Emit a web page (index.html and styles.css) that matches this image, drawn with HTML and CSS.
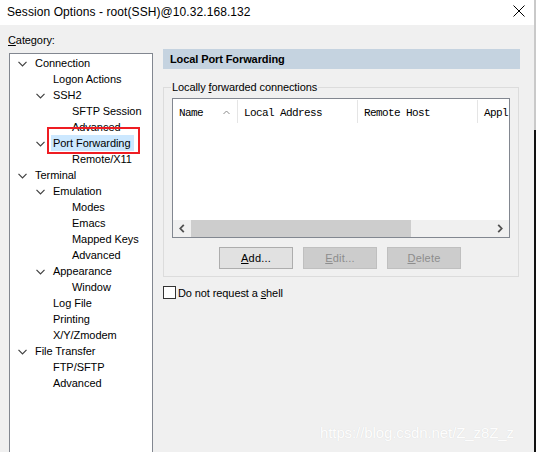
FILE: index.html
```html
<!DOCTYPE html>
<html>
<head>
<meta charset="utf-8">
<link rel="stylesheet" href="styles.css">
</head>
<body>
<div class="window">
  <div class="main">
    <div class="titlebar">
      <span class="title">Session Options - root(SSH)@10.32.168.132</span>
      <svg class="close" width="12" height="12" viewBox="0 0 12 12"><path d="M0.5 0.5 L11.5 11.5 M11.5 0.5 L0.5 11.5" stroke="#000" stroke-width="1" fill="none"/></svg>
    </div>
    <div class="body">
      <div class="left">
        <div class="cat-label"><u>C</u>ategory:</div>
        <div class="tree">
          <div class="row l0"><span class="tw"><svg width="9" height="6" viewBox="0 0 9 6"><path d="M0.5 0.8 L4.5 4.8 L8.5 0.8" stroke="#404040" stroke-width="1.2" fill="none"/></svg></span><span class="txt">Connection</span></div>
          <div class="row l1"><span class="tw"></span><span class="txt">Logon Actions</span></div>
          <div class="row l1"><span class="tw"><svg width="9" height="6" viewBox="0 0 9 6"><path d="M0.5 0.8 L4.5 4.8 L8.5 0.8" stroke="#404040" stroke-width="1.2" fill="none"/></svg></span><span class="txt">SSH2</span></div>
          <div class="row l2"><span class="txt">SFTP Session</span></div>
          <div class="row l2"><span class="txt">Advanced</span></div>
          <div class="row l1"><span class="tw"><svg width="9" height="6" viewBox="0 0 9 6"><path d="M0.5 0.8 L4.5 4.8 L8.5 0.8" stroke="#404040" stroke-width="1.2" fill="none"/></svg></span><span class="txt sel">Port Forwarding</span></div>
          <div class="row l2"><span class="txt">Remote/X11</span></div>
          <div class="row l0"><span class="tw"><svg width="9" height="6" viewBox="0 0 9 6"><path d="M0.5 0.8 L4.5 4.8 L8.5 0.8" stroke="#404040" stroke-width="1.2" fill="none"/></svg></span><span class="txt">Terminal</span></div>
          <div class="row l1"><span class="tw"><svg width="9" height="6" viewBox="0 0 9 6"><path d="M0.5 0.8 L4.5 4.8 L8.5 0.8" stroke="#404040" stroke-width="1.2" fill="none"/></svg></span><span class="txt">Emulation</span></div>
          <div class="row l2"><span class="txt">Modes</span></div>
          <div class="row l2"><span class="txt">Emacs</span></div>
          <div class="row l2"><span class="txt">Mapped Keys</span></div>
          <div class="row l2"><span class="txt">Advanced</span></div>
          <div class="row l1"><span class="tw"><svg width="9" height="6" viewBox="0 0 9 6"><path d="M0.5 0.8 L4.5 4.8 L8.5 0.8" stroke="#404040" stroke-width="1.2" fill="none"/></svg></span><span class="txt">Appearance</span></div>
          <div class="row l2"><span class="txt">Window</span></div>
          <div class="row l1"><span class="tw"></span><span class="txt">Log File</span></div>
          <div class="row l1"><span class="tw"></span><span class="txt">Printing</span></div>
          <div class="row l1"><span class="tw"></span><span class="txt">X/Y/Zmodem</span></div>
          <div class="row l0"><span class="tw"><svg width="9" height="6" viewBox="0 0 9 6"><path d="M0.5 0.8 L4.5 4.8 L8.5 0.8" stroke="#404040" stroke-width="1.2" fill="none"/></svg></span><span class="txt">File Transfer</span></div>
          <div class="row l1"><span class="tw"></span><span class="txt">FTP/SFTP</span></div>
          <div class="row l1"><span class="tw"></span><span class="txt">Advanced</span></div>
          <div class="annot"></div>
        </div>
      </div>
      <div class="right">
        <div class="section-head">Local Port Forwarding</div>
        <fieldset class="group">
          <legend>Locally <u>f</u>orwarded connections</legend>
          <div class="listbox">
            <div class="list-head">
              <div class="col c-name">Name<svg class="caret" width="7" height="5" viewBox="0 0 7 5"><path d="M0.5 4 L3.5 1 L6.5 4" stroke="#8a8a8a" stroke-width="1" fill="none"/></svg></div>
              <div class="col c-mid">Local Address</div>
              <div class="col c-mid">Remote Host</div>
              <div class="col c-last">Appl</div>
            </div>
            <div class="list-body"></div>
            <div class="hscroll">
              <div class="sb-btn"><svg width="6" height="9" viewBox="0 0 6 9"><path d="M4.8 0.8 L1.3 4.5 L4.8 8.2" stroke="#505050" stroke-width="1.8" fill="none"/></svg></div>
              <div class="sb-thumb"></div>
              <div class="sb-track"></div>
              <div class="sb-btn"><svg width="6" height="9" viewBox="0 0 6 9"><path d="M1.2 0.8 L4.7 4.5 L1.2 8.2" stroke="#505050" stroke-width="1.8" fill="none"/></svg></div>
            </div>
          </div>
          <div class="buttons">
            <div class="btn"><u>A</u>dd...</div>
            <div class="btn disabled"><u>E</u>dit...</div>
            <div class="btn disabled"><u>D</u>elete</div>
          </div>
        </fieldset>
        <div class="check"><span class="box"></span><span>Do not request a <u>s</u>hell</span></div>
      </div>
    </div>
  </div>
  <div class="edge"><div class="edge-top"></div><div class="edge-bot"></div></div>
  <div class="watermark">https://blog.csdn.net/Z_z8Z_z</div>
</div>
</body>
</html>
```

FILE: styles.css
```css
* { box-sizing: border-box; }
html, body { margin: 0; padding: 0; }
body {
  width: 537px;
  height: 452px;
  overflow: hidden;
  font-family: "Liberation Sans", Arial, sans-serif;
  font-size: 11px;
  color: #000;
  background: #f0f0f0;
}
.window {
  position: relative;
  display: flex;
  width: 537px;
  height: 452px;
  overflow: hidden;
}
.main {
  width: 534px;
  flex: none;
  display: flex;
  flex-direction: column;
  min-height: 0;
}
.edge {
  width: 3px;
  flex: none;
  display: flex;
  flex-direction: column;
  border-right: 1px solid #fff;
}
.edge-top { height: 130px; flex: none; background: #c9c9c9; }
.edge-bot { flex: 1; background: #111; }

.titlebar {
  height: 25px;
  flex: none;
  background: #fff;
  display: flex;
  align-items: center;
  justify-content: space-between;
  padding: 0 9px 1px 7px;
}
.title { font-size: 12px; letter-spacing: 0.08px; }
.close { margin-top: -2px; }

.body {
  flex: 1;
  min-height: 0;
  overflow: hidden;
  display: flex;
  background: #f0f0f0;
}
.left {
  width: 153px;
  flex: none;
  padding: 7px 0 0 9px;
  display: flex;
  flex-direction: column;
}
.cat-label {
  height: 16px;
  flex: none;
  line-height: 16px;
  margin-left: -1px;
  letter-spacing: -0.1px;
}
.tree {
  position: relative;
  flex: none;
  margin-top: 5px;
  width: 144px;
  height: 420px;
  background: #fff;
  border: 1px solid #828790;
  padding-top: 1px;
}
.row {
  height: 16px;
  display: flex;
  align-items: center;
  white-space: nowrap;
  letter-spacing: -0.05px;
}
.row.l0 { padding-left: 8px; }
.row.l1 { padding-left: 26px; }
.row.l2 { padding-left: 62px; }
.tw {
  width: 17px;
  height: 16px;
  display: flex;
  align-items: center;
  flex: none;
}
.tw svg { margin-top: 1px; }
.txt { line-height: 16px; }
.txt.sel {
  background: #cce8ff;
  padding: 0 3px 0 2px;
  margin-left: -2px;
}
.annot {
  position: absolute;
  left: 37px;
  top: 73px;
  width: 93px;
  height: 27px;
  border: 2px solid #ee1d23;
}

.right {
  flex: 1;
  padding: 24px 0 0 10px;
  display: flex;
  flex-direction: column;
}
.section-head {
  width: 357px;
  height: 20px;
  flex: none;
  background: #c5d3e0;
  font-weight: bold;
  line-height: 20px;
  padding-left: 7px;
  letter-spacing: -0.1px;
}
.group {
  margin: 11px 0 0 0;
  width: 356px;
  flex: none;
  padding: 0 8px 7px 8px;
  border: 1px solid #dcdcdc;
  min-width: 0;
}
.group legend {
  padding: 0 1px;
  margin-left: -1px;
  line-height: 14px;
  letter-spacing: -0.1px;
}
.listbox {
  margin-top: 4px;
  width: 338px;
  height: 140px;
  border: 1px solid #828790;
  background: #fff;
  display: flex;
  flex-direction: column;
  overflow: hidden;
}
.list-head {
  height: 25px;
  display: flex;
  flex: none;
  white-space: nowrap;
  font-family: "Liberation Mono", "Courier New", monospace;
  font-size: 11px;
  letter-spacing: -0.6px;
  padding-top: 1px;
}
.col {
  height: 23px;
  line-height: 27px;
  padding-left: 6px;
  border-right: 1px solid #e5e5e5;
  flex: none;
  position: relative;
}
.c-name { width: 65px; }
.c-mid { width: 120px; }
.c-last { width: 31px; border-right: none; }
.caret { position: absolute; left: 50px; top: 10px; }
.list-body { flex: 1; }
.hscroll {
  height: 17px;
  display: flex;
  background: #f0f0f0;
  flex: none;
}
.sb-btn {
  width: 18px;
  display: flex;
  align-items: center;
  justify-content: center;
}
.sb-thumb { width: 220px; background: #cdcdcd; }
.sb-track { flex: 1; }

.buttons {
  margin-top: 9px;
  display: flex;
  justify-content: center;
  gap: 10px;
  padding-right: 2px;
}
.btn {
  width: 74px;
  height: 22px;
  line-height: 20px;
  text-align: center;
  background: #e1e1e1;
  border: 1px solid #adadad;
  letter-spacing: 0.2px;
}
.btn.disabled {
  background: #cccccc;
  border-color: #bfbfbf;
  color: #8d8d8d;
}
.check {
  margin-top: 7px;
  height: 17px;
  flex: none;
  display: flex;
  align-items: center;
  gap: 2px;
  letter-spacing: -0.1px;
}
.check .box {
  width: 13px;
  height: 13px;
  border: 1px solid #333;
  background: #fff;
  flex: none;
}
.watermark {
  position: absolute;
  left: 320px;
  top: 424px;
  font-family: "Liberation Sans", Arial, sans-serif;
  font-size: 15px;
  color: rgba(255,255,255,0.97);
  text-shadow: 0 0 1px rgba(0,0,0,0.1);
  letter-spacing: -0.1px;
}
```
